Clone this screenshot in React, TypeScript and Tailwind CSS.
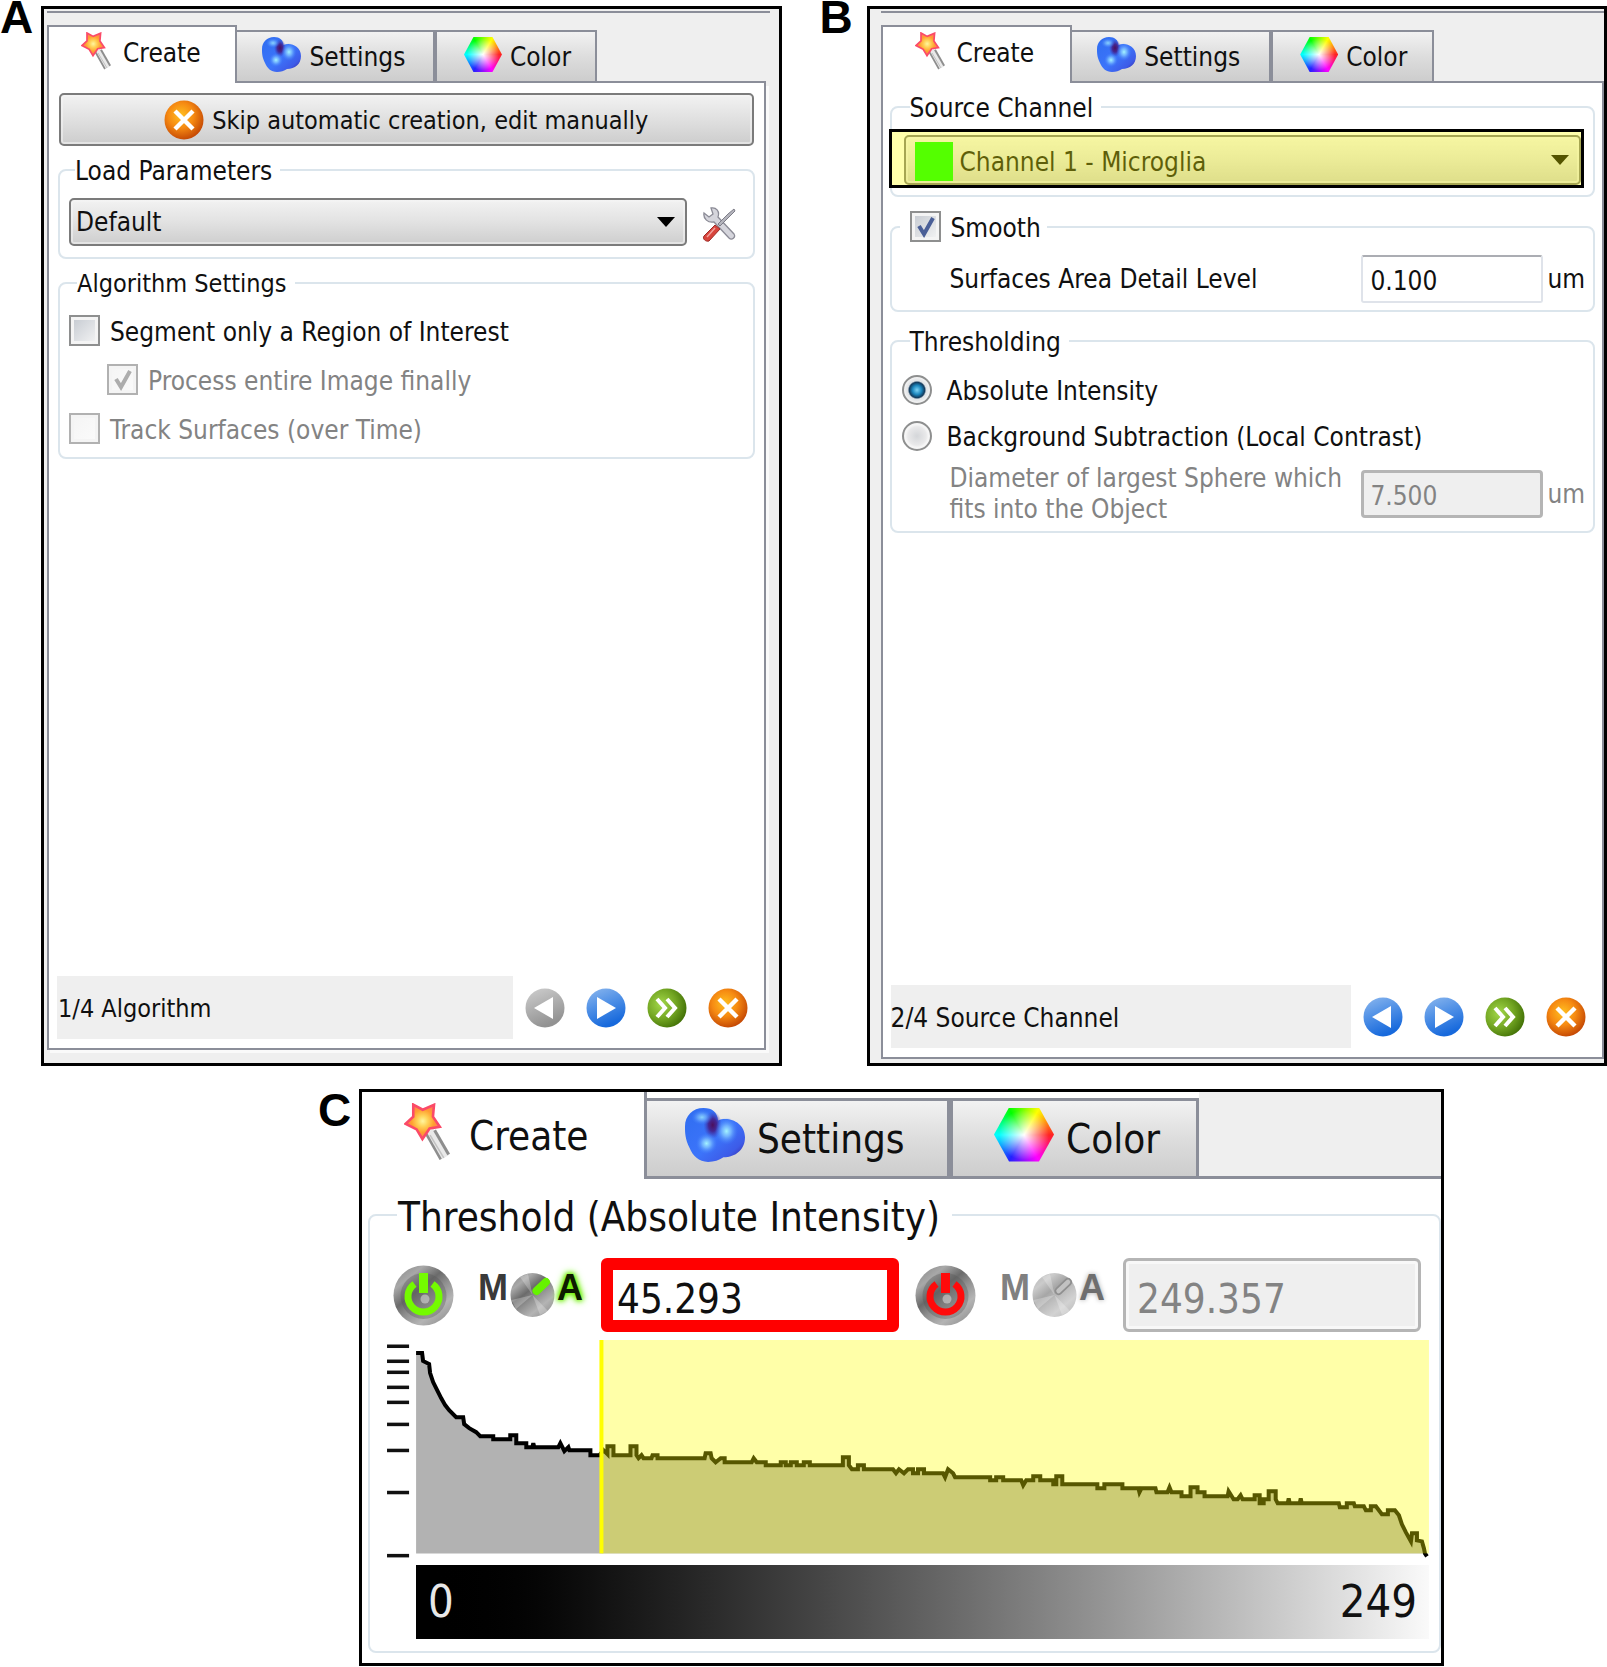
import { useState } from "react";
import type { ReactNode } from "react";

type Size = "sm" | "lg";

function Gradients() {
  return (
    <svg className="absolute h-0 w-0" aria-hidden="true">
      <defs>
        <radialGradient id="orange" cx="0.42" cy="0.38" r="0.65">
          <stop offset="0" stopColor="#ffc021" />
          <stop offset="0.5" stopColor="#f68a12" />
          <stop offset="1" stopColor="#c24503" />
        </radialGradient>
        <linearGradient id="blue" x1="0" y1="0" x2="0.4" y2="1">
          <stop offset="0" stopColor="#8db8ee" />
          <stop offset="0.5" stopColor="#4f90e6" />
          <stop offset="1" stopColor="#1769dc" />
        </linearGradient>
        <radialGradient id="green" cx="0.35" cy="0.4" r="0.7">
          <stop offset="0" stopColor="#a3d84a" />
          <stop offset="0.55" stopColor="#72a522" />
          <stop offset="1" stopColor="#3f6d05" />
        </radialGradient>
        <linearGradient id="gray" x1="0" y1="0" x2="0.4" y2="1">
          <stop offset="0" stopColor="#cfcfcf" />
          <stop offset="1" stopColor="#929292" />
        </linearGradient>
        <radialGradient id="star" cx="0.5" cy="0.48" r="0.5">
          <stop offset="0" stopColor="#fff6a0" />
          <stop offset="0.3" stopColor="#ffd45a" />
          <stop offset="0.65" stopColor="#ffa030" />
          <stop offset="1" stopColor="#ff7a58" />
        </radialGradient>
        <linearGradient id="blob" x1="0" y1="0" x2="1" y2="1">
          <stop offset="0" stopColor="#2f6df0" />
          <stop offset="0.55" stopColor="#3c74fa" />
          <stop offset="0.8" stopColor="#3d5be8" />
          <stop offset="1" stopColor="#38188a" />
        </linearGradient>
        <radialGradient id="shine">
          <stop offset="0" stopColor="#a4f4ff" />
          <stop offset="0.4" stopColor="#79bcff" stopOpacity="0.85" />
          <stop offset="1" stopColor="#3f7dfb" stopOpacity="0" />
        </radialGradient>
        <radialGradient id="cleft">
          <stop offset="0" stopColor="#4c0f5c" />
          <stop offset="0.45" stopColor="#44208a" stopOpacity="0.9" />
          <stop offset="1" stopColor="#3a40c0" stopOpacity="0" />
        </radialGradient>
        <linearGradient id="metal" x1="0.1" y1="0" x2="0.9" y2="1">
          <stop offset="0" stopColor="#8a8a8a" />
          <stop offset="0.2" stopColor="#a8a8a8" />
          <stop offset="0.4" stopColor="#6b6b6b" />
          <stop offset="0.55" stopColor="#8f8f8f" />
          <stop offset="0.75" stopColor="#b4b4b4" />
          <stop offset="1" stopColor="#8c8c8c" />
        </linearGradient>
      </defs>
    </svg>
  );
}

function WandIcon({ className }: { className: string }) {
  return (
    <svg viewBox="0 0 30 38" className={className} aria-hidden="true">
      <path d="M17 18 L27 35.5" stroke="#e9e9e9" strokeWidth="5" />
      <path d="M14.4 20 L24 37" stroke="#8e8e8e" strokeWidth="1.7" />
      <path d="M20 17.8 L29.2 33.8" stroke="#8e8e8e" strokeWidth="2" />
      <path d="M17 21 L26 36" stroke="#c2c2c2" strokeWidth="1" />
      <path
        d="M6 1 L12.2 4.4 L19.6 1.2 L18.9 9 L23.4 15.6 L16.7 16.7 L12 23.6 L8.2 17.3 L1 13.6 L6 9 Z"
        fill="url(#star)"
        stroke="#fb4a68"
        strokeWidth="1.7"
      />
    </svg>
  );
}

function BlobIcon({ className }: { className: string }) {
  return (
    <svg viewBox="0 0 39 35" className={className} aria-hidden="true">
      <path
        d="M12 0 C18 0 21 3 21.5 8 C28 5 39 9 39 19 C39 27 33 32 25 32 C22 34 19 35 15 35 C9 35 5 31 3 26 C0 20 0 16 0 12 C0 5 5 0 12 0 Z"
        fill="url(#blob)"
      />
      <ellipse cx="18" cy="11" rx="6" ry="9" fill="url(#cleft)" />
      <ellipse cx="11" cy="6" rx="7" ry="5" fill="url(#shine)" opacity="0.75" />
      <ellipse cx="27" cy="15" rx="7.5" ry="9" fill="url(#shine)" />
      <ellipse cx="14" cy="23" rx="7" ry="7" fill="url(#shine)" />
    </svg>
  );
}

function HexIcon({ className }: { className: string }) {
  return (
    <span
      aria-hidden="true"
      className={`block bg-[radial-gradient(circle,#fff_0%,#ffffff00_62%),conic-gradient(from_30deg,#ff0_0deg,#f22_60deg,#f0f_120deg,#22f_180deg,#0ff_240deg,#0f0_300deg,#ff0_360deg)] [clip-path:polygon(25%_0,75%_0,100%_50%,75%_100%,25%_100%,0_50%)] ${className}`}
    />
  );
}

function ToolsIcon() {
  return (
    <svg viewBox="0 0 34 36" className="h-9 w-[34px]" aria-hidden="true">
      <path
        d="M2 7 L7 11 L11 8 L9 2 C14 1 18 5 16 11 L32 28 C34 31 30 35 27 32 L12 16 C6 17 1 13 2 7 Z"
        fill="#d5d5dc"
        stroke="#8b8b96"
        strokeWidth="1.3"
      />
      <path d="M32 3 L33 5 L28 10 L18 20 L16 18 L26 8 Z" fill="#b4b4bc" stroke="#7d7d88" />
      <path d="M13 19 L18 23 L7 35 C4 36 0 33 2 30 Z" fill="#d8443c" stroke="#9d2a26" />
      <path d="M13 22 L5 31" stroke="#f3a29c" strokeWidth="1.5" />
    </svg>
  );
}

type RoundKind = "back" | "backOff" | "next" | "skip" | "cancel";

const roundFill: Record<RoundKind, string> = {
  back: "url(#blue)",
  backOff: "url(#gray)",
  next: "url(#blue)",
  skip: "url(#green)",
  cancel: "url(#orange)",
};

function RoundIcon({ kind }: { kind: RoundKind }) {
  return (
    <svg viewBox="0 0 40 40" className="block size-10" aria-hidden="true">
      <circle cx="20" cy="20" r="19.5" fill={roundFill[kind]} />
      {(kind === "back" || kind === "backOff") && <path d="M28 9 V31 L9 20 Z" fill="#fff" />}
      {kind === "next" && <path d="M11 9 V31 L30 20 Z" fill="#fff" />}
      {kind === "skip" && (
        <path d="M10 11 L18 20 L10 29 M20 11 L28 20 L20 29" fill="none" stroke="#fff" strokeWidth="4" />
      )}
      {kind === "cancel" && <path d="M11 11 L29 29 M29 11 L11 29" stroke="#fff" strokeWidth="4.4" />}
    </svg>
  );
}

function PowerIcon({ color }: { color: string }) {
  return (
    <svg viewBox="0 0 61 61" className="block size-[61px]" aria-hidden="true">
      <circle cx="30.5" cy="30.5" r="30" fill="url(#metal)" />
      <circle cx="30.5" cy="31" r="23" fill="#555" opacity="0.35" />
      <path d="M21.5 19 A15.5 15.5 0 1 0 39.5 19" fill="none" stroke={color} strokeWidth="7" />
      <path d="M30.5 8 V28" stroke={color} strokeWidth="9" />
      <circle cx="32" cy="34" r="4.5" fill="#d4d4d4" opacity="0.6" />
    </svg>
  );
}

function KnobIcon({ on }: { on: boolean }) {
  return (
    <svg viewBox="0 0 45 46" className="h-[46px] w-[45px]" aria-hidden="true">
      <circle cx="22.5" cy="23" r="22" fill="url(#metal)" opacity={on ? 1 : 0.6} />
      <path d="M22.5 23 L1.5 28 L6 37 Z M22.5 23 L38 39 L30 43 Z M22.5 23 L10 5 L18 2 Z" fill="#fff" opacity="0.25" />
      <path d="M26.5 19 L36 10" stroke={on ? "#66f200" : "#8f8f8f"} strokeWidth="8" strokeLinecap="round" />
      {!on && <path d="M26.5 19 L36 10" stroke="#c2c2c2" strokeWidth="4.5" strokeLinecap="round" />}
    </svg>
  );
}

const tabSizes = {
  sm: {
    strip: "h-[58px]",
    create: "w-[26.5%] border-x-2 border-t-2 pl-8 pb-2 gap-3",
    settings: "h-[53px] w-[27.5%] border-y-2 border-r-2 pl-[25px] pb-1 gap-2",
    color: "h-[53px] w-[22.5%] border-2 pl-[27px] pb-1 gap-2",
    rest: "border-b-2",
    text: "pt-1",
    wand: "h-[38px] w-[30px]",
    blob: "h-[35px] w-[39px]",
    hex: "h-[35px] w-[38px]",
  },
  lg: {
    strip: "h-[87px] text-[40px] leading-[48px]",
    create: "w-[285px] border-r-[3px] pl-[42px] pb-2 gap-[19px]",
    settings: "h-[81px] w-[303px] border-y-[3px] border-r-[3px] pl-[38px] pb-2 gap-3",
    color: "h-[81px] w-[249px] border-[3px] pl-[41px] pb-2 gap-3",
    rest: "border-b-[3px]",
    text: "pt-2",
    wand: "h-[58px] w-[46px]",
    blob: "h-[54px] w-[60px]",
    hex: "h-[54px] w-[60px]",
  },
};

function TabStrip({ size = "sm" }: { size?: Size }) {
  const s = tabSizes[size];
  const idle = "bg-linear-to-b from-[#f2f2f2] via-[#dddddd] to-[#cdcdcd]";
  return (
    <div role="tablist" className={`flex items-end ${s.strip}`}>
      <button role="tab" aria-selected="true" className={`flex h-full shrink-0 items-center border-[#8b8e99] bg-white ${s.create}`}>
        <WandIcon className={s.wand} />
        <span className={s.text}>Create</span>
      </button>
      <button role="tab" aria-selected="false" className={`flex shrink-0 items-center border-[#8b8e99] ${idle} ${s.settings}`}>
        <BlobIcon className={s.blob} />
        <span className={s.text}>Settings</span>
      </button>
      <button role="tab" aria-selected="false" className={`flex shrink-0 items-center border-[#8b8e99] ${idle} ${s.color}`}>
        <HexIcon className={s.hex} />
        <span className={s.text}>Color</span>
      </button>
      <div className={`h-full flex-1 border-[#8b8e99] bg-[#efefef] ${s.rest}`} />
    </div>
  );
}

function Check({ id, label, checked = false, disabled = false }: { id: string; label: string; checked?: boolean; disabled?: boolean }) {
  const [on, setOn] = useState(checked);
  return (
    <div className="flex h-[31px] items-center gap-[10px]">
      <span className="relative block size-[31px] shrink-0">
        <input
          id={id}
          type="checkbox"
          checked={on}
          disabled={disabled}
          onChange={(e) => setOn(e.target.checked)}
          className="block size-[31px] appearance-none border-2 border-[#8e8f8f] bg-linear-to-br from-[#c3c8cf] to-[#f6f6f6] shadow-[inset_0_0_0_3px_#f4f4f4] disabled:border-[#b1b1b1] disabled:from-[#f4f4f4] disabled:to-[#fbfbfb]"
        />
        {on && (
          <svg viewBox="0 0 31 31" className="pointer-events-none absolute inset-0" aria-hidden="true">
            <path d="M9 15 L14 23 L23 7" fill="none" stroke={disabled ? "#adadad" : "#4a5f97"} strokeWidth="4" />
          </svg>
        )}
      </span>
      <label htmlFor={id} className={`pt-[2px] ${disabled ? "text-[#838383]" : ""}`}>
        {label}
      </label>
    </div>
  );
}

function Radio({ id, label, checked, onChange }: { id: string; label: string; checked: boolean; onChange: () => void }) {
  return (
    <div className="flex h-[30px] items-center gap-[15px]">
      <input
        id={id}
        type="radio"
        name="thresholding"
        checked={checked}
        onChange={onChange}
        className="size-[30px] shrink-0 appearance-none rounded-full border-2 border-[#8e8f8f] bg-[radial-gradient(circle,#d4d6d9_0%,#e9e9ea_50%,#f6f6f6_62%)] checked:bg-[radial-gradient(circle,#7fd4f5_0%,#1c86bd_25%,#123a5c_42%,#dfe2e5_50%,#f4f4f4_70%)]"
      />
      <label htmlFor={id} className="pt-[2px]">
        {label}
      </label>
    </div>
  );
}

function Dropdown({ label, value, className }: { label: string; value: string; className: string }) {
  return (
    <div className="relative min-w-0 flex-1">
      <select
        aria-label={label}
        className={`block w-full appearance-none rounded-[5px] border-2 border-[#7b7b7b] bg-linear-to-b from-[#f2f2f2] via-[#e2e2e2] to-[#cecece] shadow-[inset_0_0_0_2px_#f6f6f688] ${className}`}
      >
        <option>{value}</option>
      </select>
      <svg viewBox="0 0 18 10" className="pointer-events-none absolute top-1/2 right-3 h-[10px] w-[18px] -translate-y-1/2" aria-hidden="true">
        <path d="M0 0 H18 L9 10 Z" fill="#000" />
      </svg>
    </div>
  );
}

function Group({ legend, legendClass, className, children }: { legend: ReactNode; legendClass: string; className: string; children: ReactNode }) {
  return (
    <fieldset className={`min-w-0 rounded-[8px] border-2 border-[#dbe5ec] ${className}`}>
      <legend className={legendClass}>{legend}</legend>
      {children}
    </fieldset>
  );
}

function Footer({ step, first = false }: { step: string; first?: boolean }) {
  return (
    <div className="mt-auto flex items-center gap-3 pr-4 pb-[9px] pl-2">
      <p className={`h-[63px] flex-1 bg-[#efefef] pt-[18px] ${first ? "pl-px text-[25px]" : ""}`}>{step}</p>
      <div className="flex gap-[21px]">
        <button aria-label="Back" disabled={first}>
          <RoundIcon kind={first ? "backOff" : "back"} />
        </button>
        <button aria-label="Next">
          <RoundIcon kind="next" />
        </button>
        <button aria-label="Finish">
          <RoundIcon kind="skip" />
        </button>
        <button aria-label="Cancel">
          <RoundIcon kind="cancel" />
        </button>
      </div>
    </div>
  );
}

function AlgorithmPanel() {
  return (
    <section className="flex min-h-[1060px] flex-col border-[3px] border-black bg-[#efefef] pt-[2px] pr-[13px] pb-[13px] pl-[3px]">
      <div className="-mr-1 mb-3 h-[2px] bg-[#8b8e99]" />
      <TabStrip />
      <div className="flex flex-1 flex-col border-x-2 border-b-2 border-[#8b8e99] bg-white shadow-[3px_3px_0_#fafafa]">
        <div className="px-[9px] pt-[10px]">
          <button className="mx-px flex h-[53px] w-[calc(100%-2px)] items-center justify-center gap-2 rounded-[5px] border-2 border-[#7b7b7b] bg-linear-to-b from-[#f2f2f2] via-[#e0e0e0] to-[#cdcdcd] text-[25px] shadow-[inset_0_0_0_2px_#f6f6f688]">
            <RoundIcon kind="cancel" />
            <span className="pt-[2px]">Skip automatic creation, edit manually</span>
          </button>
          <Group legend="Load Parameters" legendClass="ml-[6px] pt-[2px] pr-2" className="mt-2 px-[9px] pb-[11px]">
            <div className="flex items-center pt-3 pr-2">
              <Dropdown label="Load Parameters" value="Default" className="h-[48px] pl-[5px]" />
              <button aria-label="Manage parameters" className="ml-[15px] pt-1">
                <ToolsIcon />
              </button>
            </div>
          </Group>
          <Group legend="Algorithm Settings" legendClass="ml-2 pt-[2px] pr-2 text-[25px]" className="mt-2 px-[9px] pb-[13px]">
            <div className="flex flex-col gap-[18px] pt-4">
              <Check id="region" label="Segment only a Region of Interest" />
              <div className="pl-[38px]">
                <Check id="entire" label="Process entire Image finally" checked disabled />
              </div>
              <Check id="track" label="Track Surfaces (over Time)" disabled />
            </div>
          </Group>
        </div>
        <Footer step="1/4 Algorithm" first />
      </div>
    </section>
  );
}

function SourcePanel() {
  const [mode, setMode] = useState("absolute");
  const [detail, setDetail] = useState("0.100");
  return (
    <section className="flex min-h-[1060px] flex-col border-[3px] border-black bg-[#efefef] pt-[2px] pb-1 pl-[11px]">
      <div className="mb-3 h-[2px] bg-[#8b8e99]" />
      <TabStrip />
      <div className="flex flex-1 flex-col border-x-2 border-b-2 border-[#8b8e99] bg-white">
        <div className="px-[7px] pt-2">
          <Group legend="Source Channel" legendClass="ml-[18px] pt-[2px] pr-2" className="pb-[7px]">
            <div className="relative mt-[6px] mr-[9px] -ml-[3px] flex h-[59px] border-[3px] border-black pt-[3px] pl-3">
              <Dropdown label="Source Channel" value="Channel 1 - Microglia" className="h-[50px] pt-1 pl-[54px]" />
              <span className="pointer-events-none absolute top-[10px] left-[23px] h-[39px] w-[38px] bg-[#00ff00]" />
              <span className="pointer-events-none absolute inset-0 bg-[#ffff00]/33" />
            </div>
          </Group>
          <Group legend={<Check id="smooth" label="Smooth" checked />} legendClass="ml-2 h-[34px] pt-px pr-[6px] pl-[10px]" className="mt-[13px] pb-[7px]">
            <div className="flex items-center gap-1 pt-[11px] pr-2 pl-[58px]">
              <label htmlFor="detail" className="flex-1">
                Surfaces Area Detail Level
              </label>
              <input
                id="detail"
                value={detail}
                onChange={(e) => setDetail(e.target.value)}
                className="h-12 w-[182px] rounded-[3px] border-2 border-[#dfe3ea] border-t-[#abadb3] bg-white pt-1 pl-[7px]"
              />
              <span>um</span>
            </div>
          </Group>
          <Group legend="Thresholding" legendClass="ml-[18px] pt-[2px] pr-2" className="mt-[13px] pb-[6px]">
            <div className="flex flex-col gap-4 pt-[18px] pl-[10px]">
              <Radio id="absolute" label="Absolute Intensity" checked={mode === "absolute"} onChange={() => setMode("absolute")} />
              <Radio id="local" label="Background Subtraction (Local Contrast)" checked={mode === "local"} onChange={() => setMode("local")} />
            </div>
            <div className="mt-3 flex items-center gap-1 pr-2 pl-[58px] text-[#838383]">
              <label htmlFor="diameter" className="flex-1 leading-[31px]">
                Diameter of largest Sphere which
                <br />
                fits into the Object
              </label>
              <input
                id="diameter"
                disabled
                defaultValue="7.500"
                className="h-12 w-[182px] rounded-[4px] border-[3px] border-[#b5b5b5] bg-[#efefef] pt-1 pl-[6px]"
              />
              <span>um</span>
            </div>
          </Group>
        </div>
        <Footer step="2/4 Source Channel" />
      </div>
    </section>
  );
}

const ticks = [6, 21, 32, 47, 62, 84, 110, 152, 215];

// histogram outline, log scale
const outline =
  "29,13 35,13 36,21 42,24 43,33 46,42 50,50 54,58 58,65 62,70 69,77 76,77 77,84 82,88 89,92 93,96 106,96 106,99 123,99 123,95 129,95 129,103 139,103 139,107 145,107 146,103 147,107 171,107 173,103 175,107 177,111 181,107 182,110 203,110 203,115 212,115 " +
  "216,110 220,114 220,106 226,106 226,115 243,115 243,106 249,106 249,115 251,118 254,115 256,118 264,118 265,115 270,115 270,118 317,118 318,113 323,113 324,118 328,122 333,118 337,118 337,122 364,122 366,118 369,122 378,122 378,125 393,125 393,122 398,122 398,125 403,125 403,122 409,122 409,125 416,125 416,122 422,122 422,125 455,125 455,117 461,117 461,125 464,129 470,129 470,125 476,125 476,129 505,129 508,133 511,129 " +
  "516,133 520,129 525,129 525,133 530,133 530,129 536,129 536,133 555,133 557,137 560,129 565,133 567,137 602,137 602,140 608,140 608,137 615,137 615,140 633,140 635,145 638,140 645,140 645,136 652,136 652,140 665,140 665,144 668,144 668,136 674,136 674,144 709,144 709,148 716,148 716,144 734,144 734,148 750,148 751,152 753,148 767,148 768,152 779,152 781,147 783,152 793,152 793,156 802,156 802,147 809,147 809,152 816,152 816,156 839,156 840,151 845,159 849,159 852,155 854,159 866,159 866,155 871,155 871,163 875,163 875,159 880,159 880,151 887,151 887,159 889,163 899,163 900,158 901,163 911,163 912,158 913,163 " +
  "950,163 951,167 958,167 958,163 965,163 966,166 975,166 977,170 982,170 982,166 987,166 993,174 999,174 999,170 1006,170 1010,175 1013,184 1017,192 1022,201 1023,193 1028,193 1028,200 1033,201 1035,208 1036,213 1038,216";

function Histogram() {
  return (
    <svg viewBox="0 0 1040 218" className="mt-2 block h-auto w-full" role="img" aria-label="Intensity histogram">
      {ticks.map((y) => (
        <rect key={y} x="0" y={y - 1.5} width="22" height="3.5" fill="#111" />
      ))}
      <polygon points={`29,213 ${outline} 1036,213`} fill="#b2b2b2" />
      <polyline points={outline} fill="none" stroke="#000" strokeWidth="4" />
      <rect x="214" y="0" width="826" height="213" fill="#ffff00" fillOpacity="0.34" />
      <rect x="212" y="0" width="4" height="213" fill="#ffff00" />
    </svg>
  );
}

function ModeSwitch({ label, on }: { label: string; on: boolean }) {
  return (
    <button
      aria-label={label}
      disabled={!on}
      className="mr-[18px] flex h-[46px] shrink-0 items-start gap-[2px] font-['Liberation_Sans',sans-serif] text-[36px] leading-[32px] font-bold"
    >
      <span className={on ? "text-[#3a3a3a]" : "text-[#808080]"}>M</span>
      <KnobIcon on={on} />
      <span
        className={
          on
            ? "text-[#0d1a00] [text-shadow:0_0_4px_#6cf000,0_0_6px_#6cf000,0_0_8px_#6cf000]"
            : "text-[#6e6e6e] [text-shadow:0_0_5px_#aaa]"
        }
      >
        A
      </span>
    </button>
  );
}

function ThresholdPanel() {
  const [low, setLow] = useState("45.293");
  return (
    <section className="min-w-0 flex-1 border-[3px] border-black bg-white pb-[10px]">
      <TabStrip size="lg" />
      <Group
        legend="Threshold (Absolute Intensity)"
        legendClass="ml-[10px] pt-1 pr-3 pl-px text-[40px] leading-[48px]"
        className="mt-[10px] ml-[6px] pr-[10px] pb-3 pl-[17px]"
      >
        <div className="flex items-center pt-[17px] pr-2 pl-[6px] text-[40px] leading-[48px]">
          <button aria-label="Lower threshold" className="mr-6 shrink-0">
            <PowerIcon color="#74fb00" />
          </button>
          <ModeSwitch label="Lower threshold mode" on />
          <input
            aria-label="Lower threshold value"
            value={low}
            onChange={(e) => setLow(e.target.value)}
            className="mr-4 h-[74px] min-w-0 grow basis-50 rounded-[6px] border-[12px] border-[#ff0000] bg-white pt-2 pl-1"
          />
          <button aria-label="Upper threshold" className="mr-6 shrink-0">
            <PowerIcon color="#ff0a0a" />
          </button>
          <ModeSwitch label="Upper threshold mode" on={false} />
          <input
            aria-label="Upper threshold value"
            disabled
            defaultValue="249.357"
            className="h-[74px] min-w-0 grow basis-50 rounded-[6px] border-[3px] border-[#b5b5b5] bg-[#efefef] pt-2 pl-[11px] text-[#838383] shadow-[inset_0_0_0_3px_#f8f8f8]"
          />
        </div>
        <Histogram />
        <div className="mt-[7px] ml-[29px] flex h-[74px] items-center justify-between bg-linear-to-r from-black to-[#fafafa] px-3 text-[45px]">
          <span className="text-[#e8e8e8]">0</span>
          <span className="text-[#111]">249</span>
        </div>
      </Group>
    </section>
  );
}

function Letter({ children, className = "" }: { children: string; className?: string }) {
  return (
    <h2 className={`shrink-0 font-['Liberation_Sans',sans-serif] text-[46px] leading-[34px] font-bold text-black ${className}`}>
      {children}
    </h2>
  );
}

export default function App() {
  return (
    <main className="bg-white font-['DejaVu_Sans_Condensed','Noto_Sans',sans-serif] text-[26px] leading-[30px] text-[#101010]">
      <Gradients />
      <div className="grid grid-cols-[41px_minmax(0,1fr)_85px_minmax(0,1fr)]">
        <Letter>A</Letter>
        <div className="pt-[6px]">
          <AlgorithmPanel />
        </div>
        <Letter className="pl-[38px]">B</Letter>
        <div className="pt-[6px]">
          <SourcePanel />
        </div>
      </div>
      <div className="mt-[23px] flex pr-[163px] pl-[318px]">
        <Letter className="w-[41px] pt-1">C</Letter>
        <ThresholdPanel />
      </div>
    </main>
  );
}
